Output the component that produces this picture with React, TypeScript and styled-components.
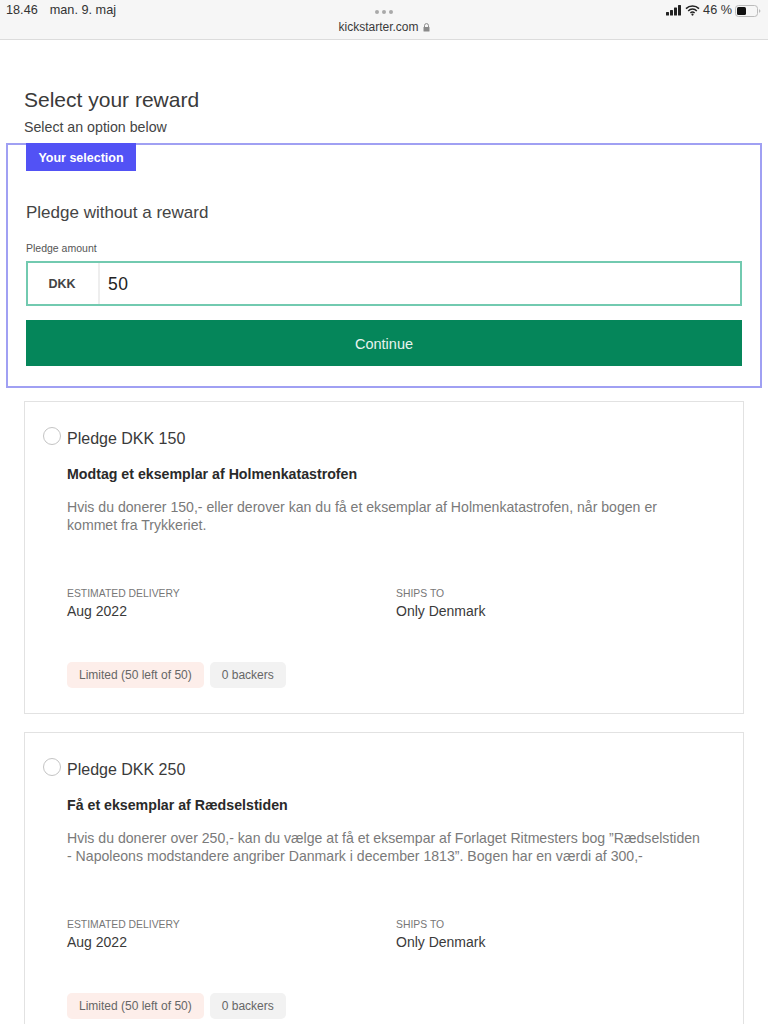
import React from 'react';
import styled, { createGlobalStyle } from 'styled-components';

const Global = createGlobalStyle`
  html, body { margin: 0; padding: 0; background: #fff; }
  body { font-family: "Liberation Sans", Arial, sans-serif; color: #2a2a2a; }
  #root { width: 768px; height: 1024px; overflow: hidden; }
  * { box-sizing: border-box; }
`;

const StatusBar = styled.header`
  height: 40px; background: #f6f6f6; border-bottom: 1px solid #dcdcdc;
  display: grid; grid-template-columns: 1fr auto 1fr; padding: 0 6px 0 6px;
`;
const StatusLeft = styled.div`
  display: flex; gap: 12px; font-size: 12.7px; line-height: 13px; padding-top: 4px; color: #333;
`;
const StatusCenter = styled.div`
  display: flex; flex-direction: column; align-items: center; padding-top: 10px;
`;
const Dots = styled.div`
  display: flex; gap: 3px; height: 4px; margin-bottom: 7px;
`;
const Dot = styled.span`
  width: 4px; height: 4px; border-radius: 50%; background: #a9a9a9;
`;
const Url = styled.div`
  display: flex; align-items: center; gap: 4px; font-size: 12px; line-height: 13px; color: #3a3a3a;
`;
const StatusRight = styled.div`
  display: flex; justify-content: flex-end; gap: 3px; font-size: 12.7px; line-height: 13px; padding-top: 4px; color: #333;
  svg { flex: none; margin-top: 1px; }
`;
const Main = styled.main`
  padding: 48px 6px 0 6px;
`;
const Intro = styled.div`
  padding-left: 18px;
`;
const Title = styled.h1`
  margin: 0; font-size: 21px; line-height: 24px; font-weight: 400; color: #3a3a3a;
`;
const Subtitle = styled.p`
  margin: 6px 0 0; font-size: 14.2px; line-height: 18px; color: #444;
`;
const SelectedBox = styled.section`
  margin-top: 7px; height: 245px; border: 2px solid #a0a0f3; padding: 0 18px;
`;
const Tag = styled.div`
  width: 110px; height: 28px; margin-top: -2px; padding-top: 1px; background: #5252f5; color: #fff; font-size: 12.5px; font-weight: 700;
  display: flex; align-items: center; justify-content: center;
`;
const BoxTitle = styled.h2`
  margin: 32px 0 0; font-size: 17px; line-height: 20px; font-weight: 400; color: #444;
`;
const Label = styled.div`
  margin-top: 18px; font-size: 10.5px; line-height: 14px; color: #555;
`;
const InputRow = styled.div`
  margin-top: 6px; height: 45px; border: 2px solid #72cab0; display: flex;
`;
const Currency = styled.div`
  width: 72px; padding-right: 2px; border-right: 2px solid #eeeeee; display: flex; align-items: center; justify-content: center;
  font-size: 12.5px; font-weight: 700; color: #444;
`;
const Amount = styled.div`
  padding: 1px 0 0 8px; display: flex; align-items: center; font-size: 17.5px; letter-spacing: 0.5px; color: #222;
`;
const Continue = styled.div`
  margin-top: 14px; height: 46px; padding-top: 1px; background: #05865a; color: #e8f3ee; font-size: 14.5px;
  display: flex; align-items: center; justify-content: center;
`;
const Card = styled.article`
  margin: 13px 18px 0; height: 313px; border: 1px solid #e2e2e2; padding: 27px 18px 0 18px;
  & + & { margin-top: 18px; height: 330px; }
`;
const CardHead = styled.div`
  display: flex; align-items: center; gap: 6px;
`;
const Radio = styled.span`
  width: 18px; height: 18px; border-radius: 50%; border: 1.5px solid #c4c4c4; background: #fff; margin-top: -6px; flex: none;
`;
const CardTitle = styled.h3`
  margin: 0; font-size: 16px; line-height: 20px; font-weight: 400; color: #3a3a3a;
`;
const RewardName = styled.div`
  margin: 16px 0 0 24px; font-size: 14.2px; line-height: 18px; font-weight: 700; color: #2a2a2a;
`;
const Description = styled.p`
  margin: 15px 0 0 24px; font-size: 14.1px; line-height: 18px; color: #7a7a7a; width: 640px;
`;
const Meta = styled.div`
  margin: 53px 0 0 24px; display: grid; grid-template-columns: 329px 1fr;
`;
const MetaLabel = styled.div`
  font-size: 10.4px; line-height: 14px; color: #777;
`;
const MetaValue = styled.div`
  font-size: 14px; line-height: 18px; color: #3a3a3a; margin-top: 1px;
`;
const Badges = styled.div`
  margin: 42px 0 0 24px; display: flex; gap: 6px;
`;
const Badge = styled.span<{ $tone: 'red' | 'grey' }>`
  height: 26px; padding: 0 12px; border-radius: 5px; font-size: 12px; color: #666;
  background: ${p => (p.$tone === 'red' ? '#fdeeea' : '#f2f2f2')};
  display: flex; align-items: center;
`;

const rewards = [
  {
    amount: 'Pledge DKK 150',
    name: 'Modtag et eksemplar af Holmenkatastrofen',
    text: 'Hvis du donerer 150,- eller derover kan du få et eksemplar af Holmenkatastrofen, når bogen er kommet fra Trykkeriet.',
  },
  {
    amount: 'Pledge DKK 250',
    name: 'Få et eksemplar af Rædselstiden',
    text: 'Hvis du donerer over 250,- kan du vælge at få et eksempar af Forlaget Ritmesters bog ”Rædselstiden - Napoleons modstandere angriber Danmark i december 1813”. Bogen har en værdi af 300,-',
  },
];

export default function App() {
  return (
    <>
      <Global />
      <StatusBar>
        <StatusLeft><span>18.46</span><span>man. 9. maj</span></StatusLeft>
        <StatusCenter>
          <Dots><Dot /><Dot /><Dot /></Dots>
          <Url>
            kickstarter.com
            <svg width="7" height="9" viewBox="0 0 7 9"><path d="M1.5 4V2.6a2 2 0 0 1 4 0V4" fill="none" stroke="#8a8a8a" strokeWidth="1" /><rect x="0.5" y="4" width="6" height="4.6" rx="0.6" fill="#8a8a8a" /></svg>
          </Url>
        </StatusCenter>
        <StatusRight>
          <svg width="16" height="11" viewBox="0 0 16 11"><rect x="0" y="7" width="3" height="3.5" rx="0.5" fill="#222" /><rect x="4" y="5" width="3" height="5.5" rx="0.5" fill="#222" /><rect x="8" y="2.5" width="3" height="8" rx="0.5" fill="#222" /><rect x="12" y="0" width="3" height="10.5" rx="0.5" fill="#222" /></svg>
          <svg width="15" height="11" viewBox="0 0 15 11"><path d="M1 3.6a9.2 9.2 0 0 1 13 0M3.2 5.9a6 6 0 0 1 8.6 0M5.4 8a3 3 0 0 1 4.2 0" fill="none" stroke="#222" strokeWidth="1.5" /><circle cx="7.5" cy="9.6" r="1.1" fill="#222" /></svg>
          <span>46 %</span>
          <svg width="27" height="12" viewBox="0 0 27 12"><rect x="0.5" y="0.5" width="22" height="11" rx="3" fill="none" stroke="#bbb" /><rect x="2" y="2" width="9" height="8" rx="1.5" fill="#111" /><path d="M24 4.2c1 .3 1.4 1 1.4 1.8s-.4 1.5-1.4 1.8z" fill="#bbb" /></svg>
        </StatusRight>
      </StatusBar>
      <Main>
        <Intro>
          <Title>Select your reward</Title>
          <Subtitle>Select an option below</Subtitle>
        </Intro>
        <SelectedBox>
          <Tag>Your selection</Tag>
          <BoxTitle>Pledge without a reward</BoxTitle>
          <Label>Pledge amount</Label>
          <InputRow>
            <Currency>DKK</Currency>
            <Amount>50</Amount>
          </InputRow>
          <Continue>Continue</Continue>
        </SelectedBox>
        {rewards.map(r => (
          <Card key={r.amount}>
            <CardHead><Radio /><CardTitle>{r.amount}</CardTitle></CardHead>
            <RewardName>{r.name}</RewardName>
            <Description>{r.text}</Description>
            <Meta>
              <div><MetaLabel>ESTIMATED DELIVERY</MetaLabel><MetaValue>Aug 2022</MetaValue></div>
              <div><MetaLabel>SHIPS TO</MetaLabel><MetaValue>Only Denmark</MetaValue></div>
            </Meta>
            <Badges>
              <Badge $tone="red">Limited (50 left of 50)</Badge>
              <Badge $tone="grey">0 backers</Badge>
            </Badges>
          </Card>
        ))}
      </Main>
    </>
  );
}
